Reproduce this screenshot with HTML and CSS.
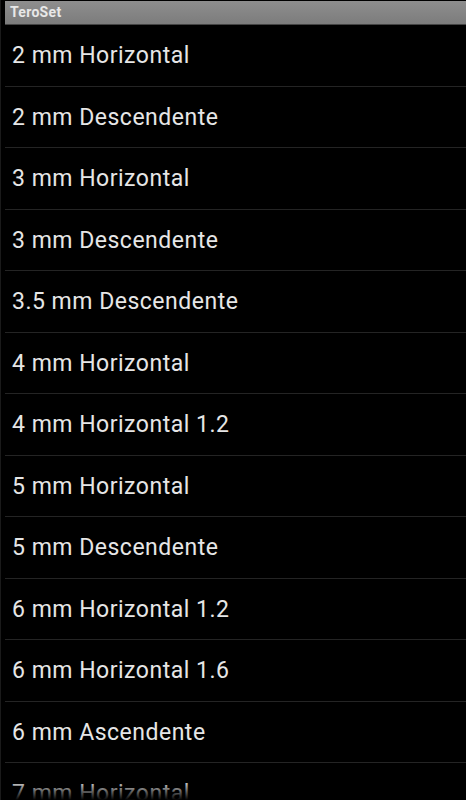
FILE: index.html
```html
<!DOCTYPE html>
<html>
<head>
  <meta charset="utf-8">
  <title>TeroSet</title>
  <link rel="stylesheet" href="styles.css">
</head>
<body>
<div class="screen">
  <div class="titlebar">TeroSet</div>
  <ul class="list">
    <li>2 mm Horizontal</li>
    <li>2 mm Descendente</li>
    <li>3 mm Horizontal</li>
    <li>3 mm Descendente</li>
    <li>3.5 mm Descendente</li>
    <li>4 mm Horizontal</li>
    <li>4 mm Horizontal 1.2</li>
    <li>5 mm Horizontal</li>
    <li>5 mm Descendente</li>
    <li>6 mm Horizontal 1.2</li>
    <li>6 mm Horizontal 1.6</li>
    <li>6 mm Ascendente</li>
    <li>7 mm Horizontal</li>
    <li>7 mm Descendente</li>
  </ul>
  <div class="fade"></div>
</div>
</body>
</html>
```
FILE: styles.css
```css
html, body { margin: 0; padding: 0; background: #000; }
body { font-family: Roboto, "Liberation Sans", sans-serif; }

.screen {
  position: relative;
  width: 466px;
  height: 800px;
  overflow: hidden;
  background: #000;
  border-left: 1px solid #1a1a1a;
  box-sizing: border-box;
}

.titlebar {
  margin: 1px 0 0 4px;
  height: 24px;
  box-sizing: border-box;
  padding-left: 5px;
  background: linear-gradient(#8e8e8e, #7c7c7c);
  border-bottom: 1px solid #444;
  color: #e8e8e8;
  font-size: 14px;
  font-weight: bold;
  letter-spacing: 0.3px;
  line-height: 23px;
}

.list {
  list-style: none;
  margin: 0;
  padding: 0 0 0 4px;
}

.list li {
  height: 61.5px;
  box-sizing: border-box;
  padding-left: 7px;
  border-bottom: 1px solid #242424;
  color: #e6e6e6;
  font-size: 23px;
  letter-spacing: 0.5px;
  line-height: 61px;
}

.fade {
  position: absolute;
  left: 0;
  right: 0;
  bottom: 0;
  height: 20px;
  background: linear-gradient(rgba(0,0,0,0), #000);
}
```
